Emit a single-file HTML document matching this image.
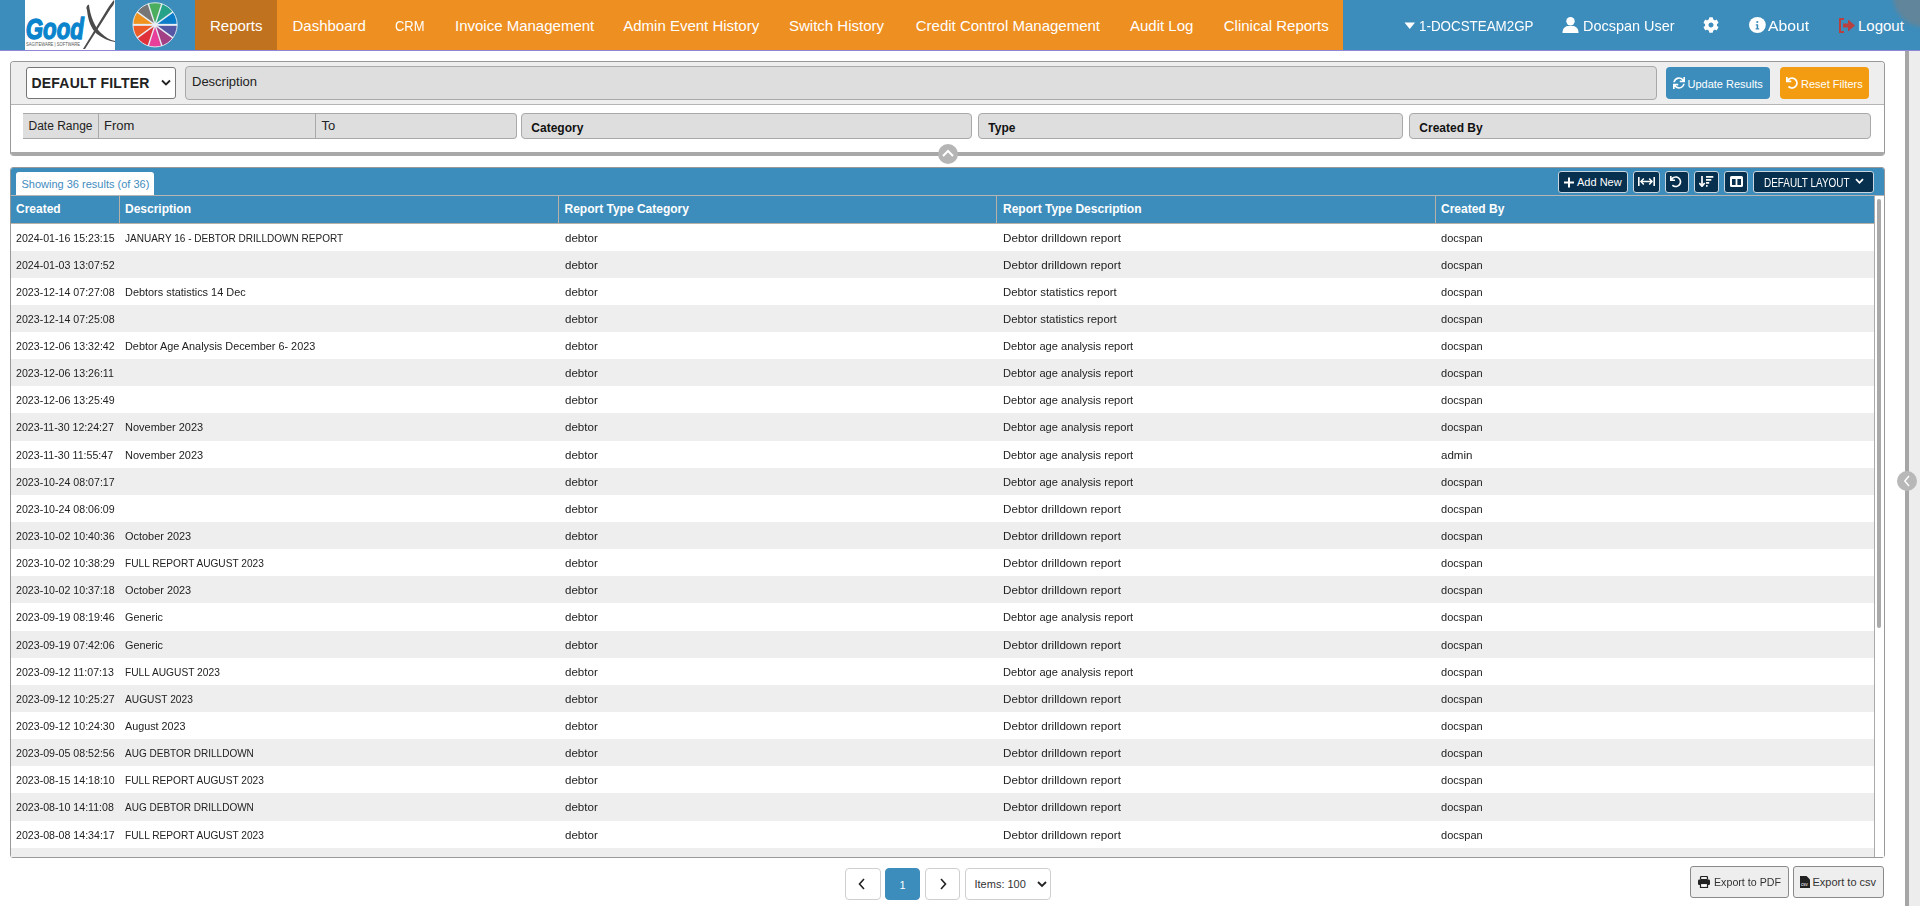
<!DOCTYPE html>
<html><head><meta charset="utf-8"><title>Reports</title>
<style>
*{box-sizing:border-box;margin:0;padding:0}
html,body{width:1920px;height:906px;overflow:hidden;background:#fff;font-family:"Liberation Sans",sans-serif;color:#333}
.abs{position:absolute}
.hdr{position:absolute;left:0;top:0;width:1920px;height:50px;background:#3c8dbc}
.nav{position:absolute;top:1px;height:50px;line-height:50px;font-size:15px;color:#fff;white-space:nowrap}
.box{position:absolute;border-radius:3px}
.inp{position:absolute;background:#dedede;border:1px solid #a9a9a9;border-radius:4px;font-size:13px;color:#222;white-space:nowrap}
.row{position:absolute;left:11px;width:1863px;height:27.14px}
.row span{position:absolute;top:0.5px;line-height:27px;font-size:11px;color:#222;white-space:nowrap}
.th{position:absolute;top:196px;height:27px;line-height:27px;font-size:12px;font-weight:bold;color:#fff;white-space:nowrap}
.tb{position:absolute;top:171px;height:22px;background:#06304e;border:1px solid #c9d6e0;border-radius:3px;color:#fff}
.pg{position:absolute;top:868px;height:32px;border:1px solid #cfcfcf;border-radius:4px;background:#fff}
.ex{position:absolute;top:866px;height:32px;border:1px solid #8a8a8a;border-radius:3px;background:#eeeeee;font-size:11px;color:#333;white-space:nowrap}
.tx{position:absolute;white-space:nowrap}
</style></head><body>

<div class="hdr"></div>
<div class="abs" style="left:195px;top:0;width:82px;height:50px;background:#c0721e"></div>
<div class="abs" style="left:277px;top:0;width:1066px;height:50px;background:#ee8f22"></div>
<div class="abs" style="left:0;top:50px;width:1920px;height:1px;background:#8f86d8"></div>
<div class="abs" style="left:25px;top:0;width:90px;height:50px;background:#fff;overflow:hidden">
<svg width="90" height="50" viewBox="0 0 90 50" style="position:absolute;left:0;top:0">
<text x="0.8" y="39.3" font-family="Liberation Sans" font-weight="bold" font-style="italic" font-size="29" fill="#0a84cc" stroke="#0a84cc" stroke-width="1.3" stroke-linejoin="round" textLength="58" lengthAdjust="spacingAndGlyphs">Good</text>
<path d="M62,10 C60,6 64,4 64,5 C65,15 70,28 76,33 C80,37 85,40 90,41 L90,42 C84,41 77,38 72,34 C66,29 63,20 62,10 Z" fill="#4a4a4a"/>
<path d="M89,0 C90,3 88,6 86,8 L60,49 L58,49 L83,8 C85,5 87,2 89,0 Z" fill="#4a4a4a"/>
<text x="1" y="46" font-family="Liberation Sans" font-size="4.6" fill="#555" textLength="54" lengthAdjust="spacingAndGlyphs">SAGITEWARE | SOFTWARE</text>
</svg></div>
<svg class="abs" style="left:0;top:0" width="200" height="50"><path d="M155.06,24.85 L148.23,3.83 A22.1,22.1 0 0 1 161.89,3.83 Z" fill="#4aae5e"/>
<path d="M155.06,24.85 L161.89,3.83 A22.1,22.1 0 0 1 172.94,11.86 Z" fill="#26a289"/>
<path d="M155.06,24.85 L172.94,11.86 A22.1,22.1 0 0 1 177.16,24.85 Z" fill="#0a7cc8"/>
<path d="M155.06,24.85 L177.16,24.85 A22.1,22.1 0 0 1 172.94,37.84 Z" fill="#5557a5"/>
<path d="M155.06,24.85 L172.94,37.84 A22.1,22.1 0 0 1 161.89,45.87 Z" fill="#a23f85"/>
<path d="M155.06,24.85 L161.89,45.87 A22.1,22.1 0 0 1 148.23,45.87 Z" fill="#e8409a"/>
<path d="M155.06,24.85 L148.23,45.87 A22.1,22.1 0 0 1 137.18,37.84 Z" fill="#e0303a"/>
<path d="M155.06,24.85 L137.18,37.84 A22.1,22.1 0 0 1 132.96,24.85 Z" fill="#ef5b26"/>
<path d="M155.06,24.85 L132.96,24.85 A22.1,22.1 0 0 1 137.18,11.86 Z" fill="#f0921e"/>
<path d="M155.06,24.85 L137.18,11.86 A22.1,22.1 0 0 1 148.23,3.83 Z" fill="#767676"/>
<line x1="155.06" y1="24.85" x2="148.23" y2="3.83" stroke="#e8eef4" stroke-width="1.4"/>
<line x1="155.06" y1="24.85" x2="161.89" y2="3.83" stroke="#e8eef4" stroke-width="1.4"/>
<line x1="155.06" y1="24.85" x2="172.94" y2="11.86" stroke="#e8eef4" stroke-width="1.4"/>
<line x1="155.06" y1="24.85" x2="177.16" y2="24.85" stroke="#e8eef4" stroke-width="2"/>
<line x1="155.06" y1="24.85" x2="172.94" y2="37.84" stroke="#e8eef4" stroke-width="1.4"/>
<line x1="155.06" y1="24.85" x2="161.89" y2="45.87" stroke="#e8eef4" stroke-width="1.4"/>
<line x1="155.06" y1="24.85" x2="148.23" y2="45.87" stroke="#e8eef4" stroke-width="1.4"/>
<line x1="155.06" y1="24.85" x2="137.18" y2="37.84" stroke="#e8eef4" stroke-width="1.4"/>
<line x1="155.06" y1="24.85" x2="132.96" y2="24.85" stroke="#e8eef4" stroke-width="2"/>
<line x1="155.06" y1="24.85" x2="137.18" y2="11.86" stroke="#e8eef4" stroke-width="1.4"/>
<circle cx="155.06" cy="24.85" r="22.1" fill="none" stroke="#e8eef4" stroke-width="0.9"/>
<circle cx="155.06" cy="24.85" r="2" fill="#e8eef4"/></svg>
<div class="nav" style="left:210px">Reports</div>
<div class="nav" style="left:292.5px">Dashboard</div>
<div class="nav" style="left:395px"><span style="display:inline-block;transform:scaleX(0.864);transform-origin:0 50%">CRM</span></div>
<div class="nav" style="left:455px">Invoice Management</div>
<div class="nav" style="left:623.25px">Admin Event History</div>
<div class="nav" style="left:789px">Switch History</div>
<div class="nav" style="left:915.75px">Credit Control Management</div>
<div class="nav" style="left:1130px">Audit Log</div>
<div class="nav" style="left:1223.75px">Clinical Reports</div>
<svg class="abs" style="left:1404px;top:21px" width="12" height="10" viewBox="0 0 12 10"><path d="M0.5,1.5 L11,1.5 L5.75,8 Z" fill="#fff"/></svg>
<div class="nav" style="left:1418.5px"><span style="display:inline-block;transform:scaleX(0.892);transform-origin:0 50%">1-DOCSTEAM2GP</span></div>
<svg class="abs" style="left:1562px;top:17px" width="17" height="16" viewBox="0 0 17 16"><circle cx="8.5" cy="4.3" r="4.2" fill="#fff"/><path d="M0.5,16 C0.5,11 3.5,9 6,9 L11,9 C13.5,9 16.5,11 16.5,16 Z" fill="#fff"/></svg>
<div class="nav" style="left:1582.5px"><span style="display:inline-block;transform:scaleX(0.963);transform-origin:0 50%">Docspan User</span></div>
<svg class="abs" style="left:1703px;top:17px" width="16" height="16" viewBox="0 0 512 512"><path fill="#fff" d="M487.4 315.7l-42.6-24.6c4.3-23.2 4.3-47 0-70.2l42.6-24.6c4.9-2.8 7.1-8.6 5.5-14-11.1-35.6-30-67.8-54.7-94.6-3.8-4.1-10-5.1-14.8-2.3L380.8 110c-17.9-15.4-38.5-27.3-60.8-35.1V25.8c0-5.6-3.9-10.5-9.4-11.7-36.7-8.2-74.3-7.8-109.2 0-5.5 1.2-9.4 6.1-9.4 11.7V75c-22.2 7.9-42.8 19.8-60.8 35.1L88.7 85.5c-4.9-2.8-11-1.9-14.8 2.3-24.7 26.7-43.6 58.9-54.7 94.6-1.7 5.4.6 11.2 5.5 14L67.3 221c-4.3 23.2-4.3 47 0 70.2l-42.6 24.6c-4.9 2.8-7.1 8.6-5.5 14 11.1 35.6 30 67.8 54.7 94.6 3.8 4.1 10 5.1 14.8 2.3l42.6-24.6c17.9 15.4 38.5 27.3 60.8 35.1v49.2c0 5.6 3.9 10.5 9.4 11.7 36.7 8.2 74.3 7.8 109.2 0 5.5-1.2 9.4-6.1 9.4-11.7v-49.2c22.2-7.9 42.8-19.8 60.8-35.1l42.6 24.6c4.9 2.8 11 1.9 14.8-2.3 24.7-26.7 43.6-58.9 54.7-94.6 1.5-5.5-.7-11.3-5.6-14.1zM256 336c-44.1 0-80-35.9-80-80s35.9-80 80-80 80 35.9 80 80-35.9 80-80 80z"/></svg>
<svg class="abs" style="left:1749px;top:17px" width="17" height="16" viewBox="0 0 17 16"><ellipse cx="8.4" cy="8" rx="8.4" ry="8" fill="#fff"/><circle cx="8.3" cy="5" r="1.1" fill="#3c8dbc"/><path d="M6.8,7.2 L9.2,7.2 L9.2,11.3 L10.2,11.3 L10.2,12.5 L6.6,12.5 L6.6,11.3 L7.6,11.3 L7.6,8.4 L6.8,8.4 Z" fill="#3c8dbc"/></svg>
<div class="nav" style="left:1768.2px"><span style="display:inline-block;transform:scaleX(1.046);transform-origin:0 50%">About</span></div>
<svg class="abs" style="left:1838.5px;top:17.5px" width="17" height="15" viewBox="0 0 17 15"><path d="M5,1 L1,1 L1,14 L5,14" fill="none" stroke="#b8413f" stroke-width="2"/><path d="M4,5.5 L9,5.5 L9,1.5 L16,7.5 L9,13.5 L9,9.5 L4,9.5 Z" fill="#b8413f"/></svg>
<div class="nav" style="left:1858px">Logout</div>
<div class="abs" style="left:1893px;top:-35px;width:62px;height:62px;border-radius:50%;background:rgba(128,128,128,0.55);filter:blur(2px)"></div>
<div class="abs" style="left:1905px;top:51px;width:4px;height:855px;background:#a6a6a6"></div>
<div class="abs" style="left:1909px;top:51px;width:11px;height:855px;background:#ededed"></div>
<div class="abs" style="left:1897px;top:471px;width:20px;height:20px;border-radius:50%;background:#b8b8b8"></div>
<svg class="abs" style="left:1902px;top:475px" width="10" height="12" viewBox="0 0 10 12"><path d="M7,1 L2.8,6 L7,11" fill="none" stroke="#fff" stroke-width="1.4"/></svg>
<div class="abs" style="left:10px;top:61px;width:1875px;height:95px;border:1px solid #999;border-bottom:0;border-radius:4px;background:#fff;overflow:hidden"><div class="abs" style="left:0;top:0;width:100%;height:43px;background:#eeeeee;border-bottom:1px solid #b5b5b5"></div><div class="abs" style="left:0;bottom:0;width:100%;height:4px;background:#a8a8a8"></div></div>
<div class="abs" style="left:26px;top:67px;width:150px;height:32px;background:#fff;border:1px solid #767676;border-radius:3px"></div>
<div class="tx" style="left:31.5px;top:67px;line-height:32px;font-size:14px;font-weight:bold;color:#222;letter-spacing:0.2px">DEFAULT FILTER</div>
<svg class="abs" style="left:161px;top:79px" width="10" height="8" viewBox="0 0 10 8"><path d="M1,1.5 L5,5.5 L9,1.5" fill="none" stroke="#222" stroke-width="1.8"/></svg>
<div class="inp" style="left:185px;top:66px;width:1472px;height:34px;line-height:29px;padding-left:6px">Description</div>
<div class="box" style="left:1666px;top:67px;width:104px;height:32px;background:#3c8dbc;border-radius:4px"></div>
<svg class="abs" style="left:1672.5px;top:77px" width="12" height="12" viewBox="0 0 512 512"><path fill="#fff" d="M440.65 12.57l4 82.77A247.16 247.16 0 0 0 255.83 8C134.73 8 33.91 94.92 12.29 209.82A12 12 0 0 0 24.09 224h49.05a12 12 0 0 0 11.67-9.26 175.91 175.91 0 0 1 317-56.94l-101.46-4.86a12 12 0 0 0-12.57 12v47.41a12 12 0 0 0 12 12H500a12 12 0 0 0 12-12V12a12 12 0 0 0-12-12h-47.37a12 12 0 0 0-11.98 12.57zM255.83 432a175.61 175.61 0 0 1-146-77.8l101.8 4.87a12 12 0 0 0 12.57-12v-47.4a12 12 0 0 0-12-12H12a12 12 0 0 0-12 12V500a12 12 0 0 0 12 12h47.35a12 12 0 0 0 12-12.6l-4.15-82.57A247.17 247.17 0 0 0 255.83 504c121.11 0 221.93-86.92 243.55-201.82a12 12 0 0 0-11.8-14.18h-49.05a12 12 0 0 0-11.67 9.26A175.86 175.86 0 0 1 255.83 432z"/></svg>
<div class="tx" style="left:1687.5px;top:67px;line-height:35px;font-size:11px;color:#fff">Update Results</div>
<div class="box" style="left:1780px;top:67px;width:89px;height:32px;background:#f39c12;border-radius:4px"></div>
<svg class="abs" style="left:1786px;top:77px" width="12" height="12" viewBox="0 0 512 512"><path fill="#fff" d="M212.333 224.333H12c-6.627 0-12-5.373-12-12V12C0 5.373 5.373 0 12 0h48c6.627 0 12 5.373 12 12v78.112C117.773 39.279 184.26 7.47 258.175 8.007c136.906.994 246.448 111.623 246.157 248.532C504.041 393.258 393.12 504 256.333 504c-64.089 0-122.496-24.313-166.51-64.215-5.099-4.622-5.334-12.554-.467-17.42l33.967-33.967c4.474-4.474 11.662-4.717 16.401-.525C170.76 415.336 211.58 432 256.333 432c97.268 0 176-78.716 176-176 0-97.267-78.716-176-176-176-58.496 0-110.28 28.476-142.274 72.333h98.274c6.627 0 12 5.373 12 12v48c0 6.627-5.373 12-12 12z"/></svg>
<div class="tx" style="left:1801px;top:67px;line-height:35px;font-size:11px;color:#fff">Reset Filters</div>
<div class="inp" style="left:23px;top:113px;width:494px;height:26px;border-left:0;border-radius:0 4px 4px 0"></div>
<div class="abs" style="left:98px;top:114px;width:1px;height:24px;background:#a9a9a9"></div>
<div class="abs" style="left:315px;top:114px;width:1px;height:24px;background:#a9a9a9"></div>
<div class="tx" style="left:28.5px;top:113px;line-height:26px;font-size:12px;color:#222">Date Range</div>
<div class="tx" style="left:104px;top:113px;line-height:26px;font-size:13px;color:#222">From</div>
<div class="tx" style="left:321.5px;top:113px;line-height:26px;font-size:13px;color:#222">To</div>
<div class="inp" style="left:521px;top:113px;width:451px;height:26px;line-height:28px;padding-left:9.3px;font-weight:bold;font-size:12px;color:#111">Category</div>
<div class="inp" style="left:978px;top:113px;width:425px;height:26px;line-height:28px;padding-left:9.3px;font-weight:bold;font-size:12px;color:#111">Type</div>
<div class="inp" style="left:1409px;top:113px;width:462px;height:26px;line-height:28px;padding-left:9.3px;font-weight:bold;font-size:12px;color:#111">Created By</div>
<div class="abs" style="left:938px;top:144px;width:20px;height:20px;border-radius:50%;background:#b5b5b5"></div>
<svg class="abs" style="left:941px;top:148px" width="14" height="10" viewBox="0 0 14 10"><path d="M2,8 L7,3 L12,8" fill="none" stroke="#fff" stroke-width="2"/></svg>
<div class="abs" style="left:10px;top:167px;width:1875px;height:691px;border:1px solid #999;border-radius:3px;background:#fff;overflow:hidden"><div class="abs" style="left:0;top:0;width:100%;height:28px;background:#3c8dbc;border-bottom:1px solid #b5b5b5"></div></div>
<div class="abs" style="left:16px;top:172px;width:138px;height:23px;background:#fff;border-radius:3px 3px 0 0"></div>
<div class="tx" style="left:21.5px;top:172px;line-height:24px;font-size:11px;color:#3f8cc0">Showing 36 results (of 36)</div>
<div class="tb" style="left:1558px;width:70px"></div>
<svg class="abs" style="left:1564px;top:176.5px" width="10" height="11" viewBox="0 0 10 11"><path d="M5,0.5 V10.5 M0,5.5 H10" stroke="#fff" stroke-width="2"/></svg>
<div class="tx" style="left:1577px;top:172px;line-height:21px;font-size:11px;color:#fff">Add New</div>
<div class="tb" style="left:1633px;width:27px"></div>
<svg class="abs" style="left:1638px;top:177px" width="17" height="9" viewBox="0 0 17 9"><path d="M0.8,0 V9 M16.2,0 V9" stroke="#fff" stroke-width="1.6"/><path d="M3,4.5 H14" stroke="#fff" stroke-width="1.5"/><path d="M5.8,1.6 L3,4.5 L5.8,7.4 M11.2,1.6 L14,4.5 L11.2,7.4" fill="none" stroke="#fff" stroke-width="1.5"/></svg>
<div class="tb" style="left:1665px;width:24px"></div>
<svg class="abs" style="left:1670px;top:176px" width="11.5" height="11.5" viewBox="0 0 512 512"><path fill="#fff" d="M212.333 224.333H12c-6.627 0-12-5.373-12-12V12C0 5.373 5.373 0 12 0h48c6.627 0 12 5.373 12 12v78.112C117.773 39.279 184.26 7.47 258.175 8.007c136.906.994 246.448 111.623 246.157 248.532C504.041 393.258 393.12 504 256.333 504c-64.089 0-122.496-24.313-166.51-64.215-5.099-4.622-5.334-12.554-.467-17.42l33.967-33.967c4.474-4.474 11.662-4.717 16.401-.525C170.76 415.336 211.58 432 256.333 432c97.268 0 176-78.716 176-176 0-97.267-78.716-176-176-176-58.496 0-110.28 28.476-142.274 72.333h98.274c6.627 0 12 5.373 12 12v48c0 6.627-5.373 12-12 12z"/></svg>
<div class="tb" style="left:1694px;width:25px"></div>
<svg class="abs" style="left:1699px;top:176px" width="15" height="11" viewBox="0 0 15 11"><path d="M3,0 V9.5" stroke="#fff" stroke-width="1.7"/><path d="M0.3,7 L3,10.3 L5.7,7" fill="none" stroke="#fff" stroke-width="1.6"/><path d="M7,0.9 H14.3 M7,3.8 H12.3 M7,6.8 H10.2 M7,9.8 H8.6" stroke="#fff" stroke-width="1.7"/></svg>
<div class="tb" style="left:1724px;width:24px"></div>
<svg class="abs" style="left:1729.7px;top:176px" width="13" height="11" viewBox="0 0 13 11"><rect x="0" y="0" width="13" height="11" rx="1.5" fill="#fff"/><rect x="2" y="3" width="3.6" height="6" fill="#06304e"/><rect x="7.4" y="3" width="3.6" height="6" fill="#06304e"/></svg>
<div class="tb" style="left:1753px;width:121px"></div>
<div class="tx" style="left:1763.5px;top:172px;line-height:22px;font-size:12px;color:#fff"><span style="display:inline-block;transform:scaleX(0.827);transform-origin:0 50%">DEFAULT LAYOUT</span></div>
<svg class="abs" style="left:1855px;top:178px" width="9" height="7" viewBox="0 0 9 7"><path d="M1,1.2 L4.5,4.8 L8,1.2" fill="none" stroke="#fff" stroke-width="1.8"/></svg>
<div class="abs" style="left:11px;top:196px;width:1863px;height:27px;background:#3c8dbc"></div>
<div class="abs" style="left:119px;top:196px;width:1px;height:27px;background:#b9b0a8"></div>
<div class="abs" style="left:558px;top:196px;width:1px;height:27px;background:#b9b0a8"></div>
<div class="abs" style="left:996px;top:196px;width:1px;height:27px;background:#b9b0a8"></div>
<div class="abs" style="left:1435px;top:196px;width:1px;height:27px;background:#b9b0a8"></div>
<div class="abs" style="left:11px;top:223px;width:1863px;height:1px;background:#b9b0a8"></div>
<div class="th" style="left:16px">Created</div>
<div class="th" style="left:125px">Description</div>
<div class="th" style="left:564.5px">Report Type Category</div>
<div class="th" style="left:1003px">Report Type Description</div>
<div class="th" style="left:1441px">Created By</div>
<div class="abs" style="left:0;top:223.5px;width:1874px;height:633.5px;overflow:hidden">
<div class="row" style="top:0.00px;background:#fff"><span style="left:5px"><span style="display:inline-block;transform:scaleX(0.965);transform-origin:0 50%">2024-01-16 15:23:15</span></span><span style="left:114px"><span style="display:inline-block;transform:scaleX(0.911);transform-origin:0 50%">JANUARY 16 - DEBTOR DRILLDOWN REPORT</span></span><span style="left:553.5px"><span style="display:inline-block;transform:scaleX(1.052);transform-origin:0 50%">debtor</span></span><span style="left:992px"><span style="display:inline-block;transform:scaleX(1.060);transform-origin:0 50%">Debtor drilldown report</span></span><span style="left:1430px"><span style="display:inline-block;transform:scaleX(1.003);transform-origin:0 50%">docspan</span></span></div>
<div class="row" style="top:27.14px;background:#eeeeee"><span style="left:5px"><span style="display:inline-block;transform:scaleX(0.966);transform-origin:0 50%">2024-01-03 13:07:52</span></span><span style="left:114px"></span><span style="left:553.5px"><span style="display:inline-block;transform:scaleX(1.052);transform-origin:0 50%">debtor</span></span><span style="left:992px"><span style="display:inline-block;transform:scaleX(1.060);transform-origin:0 50%">Debtor drilldown report</span></span><span style="left:1430px"><span style="display:inline-block;transform:scaleX(1.003);transform-origin:0 50%">docspan</span></span></div>
<div class="row" style="top:54.28px;background:#fff"><span style="left:5px"><span style="display:inline-block;transform:scaleX(0.966);transform-origin:0 50%">2023-12-14 07:27:08</span></span><span style="left:114px"><span style="display:inline-block;transform:scaleX(0.992);transform-origin:0 50%">Debtors statistics 14 Dec</span></span><span style="left:553.5px"><span style="display:inline-block;transform:scaleX(1.052);transform-origin:0 50%">debtor</span></span><span style="left:992px"><span style="display:inline-block;transform:scaleX(1.033);transform-origin:0 50%">Debtor statistics report</span></span><span style="left:1430px"><span style="display:inline-block;transform:scaleX(1.003);transform-origin:0 50%">docspan</span></span></div>
<div class="row" style="top:81.42px;background:#eeeeee"><span style="left:5px"><span style="display:inline-block;transform:scaleX(0.966);transform-origin:0 50%">2023-12-14 07:25:08</span></span><span style="left:114px"></span><span style="left:553.5px"><span style="display:inline-block;transform:scaleX(1.052);transform-origin:0 50%">debtor</span></span><span style="left:992px"><span style="display:inline-block;transform:scaleX(1.033);transform-origin:0 50%">Debtor statistics report</span></span><span style="left:1430px"><span style="display:inline-block;transform:scaleX(1.003);transform-origin:0 50%">docspan</span></span></div>
<div class="row" style="top:108.56px;background:#fff"><span style="left:5px"><span style="display:inline-block;transform:scaleX(0.966);transform-origin:0 50%">2023-12-06 13:32:42</span></span><span style="left:114px"><span style="display:inline-block;transform:scaleX(0.988);transform-origin:0 50%">Debtor Age Analysis December 6- 2023</span></span><span style="left:553.5px"><span style="display:inline-block;transform:scaleX(1.052);transform-origin:0 50%">debtor</span></span><span style="left:992px"><span style="display:inline-block;transform:scaleX(1.009);transform-origin:0 50%">Debtor age analysis report</span></span><span style="left:1430px"><span style="display:inline-block;transform:scaleX(1.003);transform-origin:0 50%">docspan</span></span></div>
<div class="row" style="top:135.70px;background:#eeeeee"><span style="left:5px"><span style="display:inline-block;transform:scaleX(0.966);transform-origin:0 50%">2023-12-06 13:26:11</span></span><span style="left:114px"></span><span style="left:553.5px"><span style="display:inline-block;transform:scaleX(1.052);transform-origin:0 50%">debtor</span></span><span style="left:992px"><span style="display:inline-block;transform:scaleX(1.009);transform-origin:0 50%">Debtor age analysis report</span></span><span style="left:1430px"><span style="display:inline-block;transform:scaleX(1.003);transform-origin:0 50%">docspan</span></span></div>
<div class="row" style="top:162.84px;background:#fff"><span style="left:5px"><span style="display:inline-block;transform:scaleX(0.966);transform-origin:0 50%">2023-12-06 13:25:49</span></span><span style="left:114px"></span><span style="left:553.5px"><span style="display:inline-block;transform:scaleX(1.052);transform-origin:0 50%">debtor</span></span><span style="left:992px"><span style="display:inline-block;transform:scaleX(1.009);transform-origin:0 50%">Debtor age analysis report</span></span><span style="left:1430px"><span style="display:inline-block;transform:scaleX(1.003);transform-origin:0 50%">docspan</span></span></div>
<div class="row" style="top:189.98px;background:#eeeeee"><span style="left:5px"><span style="display:inline-block;transform:scaleX(0.966);transform-origin:0 50%">2023-11-30 12:24:27</span></span><span style="left:114px"><span style="display:inline-block;transform:scaleX(0.998);transform-origin:0 50%">November 2023</span></span><span style="left:553.5px"><span style="display:inline-block;transform:scaleX(1.052);transform-origin:0 50%">debtor</span></span><span style="left:992px"><span style="display:inline-block;transform:scaleX(1.009);transform-origin:0 50%">Debtor age analysis report</span></span><span style="left:1430px"><span style="display:inline-block;transform:scaleX(1.003);transform-origin:0 50%">docspan</span></span></div>
<div class="row" style="top:217.12px;background:#fff"><span style="left:5px"><span style="display:inline-block;transform:scaleX(0.966);transform-origin:0 50%">2023-11-30 11:55:47</span></span><span style="left:114px"><span style="display:inline-block;transform:scaleX(0.998);transform-origin:0 50%">November 2023</span></span><span style="left:553.5px"><span style="display:inline-block;transform:scaleX(1.052);transform-origin:0 50%">debtor</span></span><span style="left:992px"><span style="display:inline-block;transform:scaleX(1.009);transform-origin:0 50%">Debtor age analysis report</span></span><span style="left:1430px"><span style="display:inline-block;transform:scaleX(1.051);transform-origin:0 50%">admin</span></span></div>
<div class="row" style="top:244.26px;background:#eeeeee"><span style="left:5px"><span style="display:inline-block;transform:scaleX(0.966);transform-origin:0 50%">2023-10-24 08:07:17</span></span><span style="left:114px"></span><span style="left:553.5px"><span style="display:inline-block;transform:scaleX(1.052);transform-origin:0 50%">debtor</span></span><span style="left:992px"><span style="display:inline-block;transform:scaleX(1.009);transform-origin:0 50%">Debtor age analysis report</span></span><span style="left:1430px"><span style="display:inline-block;transform:scaleX(1.003);transform-origin:0 50%">docspan</span></span></div>
<div class="row" style="top:271.40px;background:#fff"><span style="left:5px"><span style="display:inline-block;transform:scaleX(0.966);transform-origin:0 50%">2023-10-24 08:06:09</span></span><span style="left:114px"></span><span style="left:553.5px"><span style="display:inline-block;transform:scaleX(1.052);transform-origin:0 50%">debtor</span></span><span style="left:992px"><span style="display:inline-block;transform:scaleX(1.060);transform-origin:0 50%">Debtor drilldown report</span></span><span style="left:1430px"><span style="display:inline-block;transform:scaleX(1.003);transform-origin:0 50%">docspan</span></span></div>
<div class="row" style="top:298.54px;background:#eeeeee"><span style="left:5px"><span style="display:inline-block;transform:scaleX(0.966);transform-origin:0 50%">2023-10-02 10:40:36</span></span><span style="left:114px"><span style="display:inline-block;transform:scaleX(0.993);transform-origin:0 50%">October 2023</span></span><span style="left:553.5px"><span style="display:inline-block;transform:scaleX(1.052);transform-origin:0 50%">debtor</span></span><span style="left:992px"><span style="display:inline-block;transform:scaleX(1.060);transform-origin:0 50%">Debtor drilldown report</span></span><span style="left:1430px"><span style="display:inline-block;transform:scaleX(1.003);transform-origin:0 50%">docspan</span></span></div>
<div class="row" style="top:325.68px;background:#fff"><span style="left:5px"><span style="display:inline-block;transform:scaleX(0.966);transform-origin:0 50%">2023-10-02 10:38:29</span></span><span style="left:114px"><span style="display:inline-block;transform:scaleX(0.922);transform-origin:0 50%">FULL REPORT AUGUST 2023</span></span><span style="left:553.5px"><span style="display:inline-block;transform:scaleX(1.052);transform-origin:0 50%">debtor</span></span><span style="left:992px"><span style="display:inline-block;transform:scaleX(1.060);transform-origin:0 50%">Debtor drilldown report</span></span><span style="left:1430px"><span style="display:inline-block;transform:scaleX(1.003);transform-origin:0 50%">docspan</span></span></div>
<div class="row" style="top:352.82px;background:#eeeeee"><span style="left:5px"><span style="display:inline-block;transform:scaleX(0.966);transform-origin:0 50%">2023-10-02 10:37:18</span></span><span style="left:114px"><span style="display:inline-block;transform:scaleX(0.993);transform-origin:0 50%">October 2023</span></span><span style="left:553.5px"><span style="display:inline-block;transform:scaleX(1.052);transform-origin:0 50%">debtor</span></span><span style="left:992px"><span style="display:inline-block;transform:scaleX(1.060);transform-origin:0 50%">Debtor drilldown report</span></span><span style="left:1430px"><span style="display:inline-block;transform:scaleX(1.003);transform-origin:0 50%">docspan</span></span></div>
<div class="row" style="top:379.96px;background:#fff"><span style="left:5px"><span style="display:inline-block;transform:scaleX(0.966);transform-origin:0 50%">2023-09-19 08:19:46</span></span><span style="left:114px"><span style="display:inline-block;transform:scaleX(0.987);transform-origin:0 50%">Generic</span></span><span style="left:553.5px"><span style="display:inline-block;transform:scaleX(1.052);transform-origin:0 50%">debtor</span></span><span style="left:992px"><span style="display:inline-block;transform:scaleX(1.009);transform-origin:0 50%">Debtor age analysis report</span></span><span style="left:1430px"><span style="display:inline-block;transform:scaleX(1.003);transform-origin:0 50%">docspan</span></span></div>
<div class="row" style="top:407.10px;background:#eeeeee"><span style="left:5px"><span style="display:inline-block;transform:scaleX(0.966);transform-origin:0 50%">2023-09-19 07:42:06</span></span><span style="left:114px"><span style="display:inline-block;transform:scaleX(0.987);transform-origin:0 50%">Generic</span></span><span style="left:553.5px"><span style="display:inline-block;transform:scaleX(1.052);transform-origin:0 50%">debtor</span></span><span style="left:992px"><span style="display:inline-block;transform:scaleX(1.060);transform-origin:0 50%">Debtor drilldown report</span></span><span style="left:1430px"><span style="display:inline-block;transform:scaleX(1.003);transform-origin:0 50%">docspan</span></span></div>
<div class="row" style="top:434.24px;background:#fff"><span style="left:5px"><span style="display:inline-block;transform:scaleX(0.966);transform-origin:0 50%">2023-09-12 11:07:13</span></span><span style="left:114px"><span style="display:inline-block;transform:scaleX(0.929);transform-origin:0 50%">FULL AUGUST 2023</span></span><span style="left:553.5px"><span style="display:inline-block;transform:scaleX(1.052);transform-origin:0 50%">debtor</span></span><span style="left:992px"><span style="display:inline-block;transform:scaleX(1.009);transform-origin:0 50%">Debtor age analysis report</span></span><span style="left:1430px"><span style="display:inline-block;transform:scaleX(1.003);transform-origin:0 50%">docspan</span></span></div>
<div class="row" style="top:461.38px;background:#eeeeee"><span style="left:5px"><span style="display:inline-block;transform:scaleX(0.966);transform-origin:0 50%">2023-09-12 10:25:27</span></span><span style="left:114px"><span style="display:inline-block;transform:scaleX(0.927);transform-origin:0 50%">AUGUST 2023</span></span><span style="left:553.5px"><span style="display:inline-block;transform:scaleX(1.052);transform-origin:0 50%">debtor</span></span><span style="left:992px"><span style="display:inline-block;transform:scaleX(1.060);transform-origin:0 50%">Debtor drilldown report</span></span><span style="left:1430px"><span style="display:inline-block;transform:scaleX(1.003);transform-origin:0 50%">docspan</span></span></div>
<div class="row" style="top:488.52px;background:#fff"><span style="left:5px"><span style="display:inline-block;transform:scaleX(0.966);transform-origin:0 50%">2023-09-12 10:24:30</span></span><span style="left:114px"><span style="display:inline-block;transform:scaleX(0.979);transform-origin:0 50%">August 2023</span></span><span style="left:553.5px"><span style="display:inline-block;transform:scaleX(1.052);transform-origin:0 50%">debtor</span></span><span style="left:992px"><span style="display:inline-block;transform:scaleX(1.060);transform-origin:0 50%">Debtor drilldown report</span></span><span style="left:1430px"><span style="display:inline-block;transform:scaleX(1.003);transform-origin:0 50%">docspan</span></span></div>
<div class="row" style="top:515.66px;background:#eeeeee"><span style="left:5px"><span style="display:inline-block;transform:scaleX(0.966);transform-origin:0 50%">2023-09-05 08:52:56</span></span><span style="left:114px"><span style="display:inline-block;transform:scaleX(0.910);transform-origin:0 50%">AUG DEBTOR DRILLDOWN</span></span><span style="left:553.5px"><span style="display:inline-block;transform:scaleX(1.052);transform-origin:0 50%">debtor</span></span><span style="left:992px"><span style="display:inline-block;transform:scaleX(1.060);transform-origin:0 50%">Debtor drilldown report</span></span><span style="left:1430px"><span style="display:inline-block;transform:scaleX(1.003);transform-origin:0 50%">docspan</span></span></div>
<div class="row" style="top:542.80px;background:#fff"><span style="left:5px"><span style="display:inline-block;transform:scaleX(0.966);transform-origin:0 50%">2023-08-15 14:18:10</span></span><span style="left:114px"><span style="display:inline-block;transform:scaleX(0.922);transform-origin:0 50%">FULL REPORT AUGUST 2023</span></span><span style="left:553.5px"><span style="display:inline-block;transform:scaleX(1.052);transform-origin:0 50%">debtor</span></span><span style="left:992px"><span style="display:inline-block;transform:scaleX(1.060);transform-origin:0 50%">Debtor drilldown report</span></span><span style="left:1430px"><span style="display:inline-block;transform:scaleX(1.003);transform-origin:0 50%">docspan</span></span></div>
<div class="row" style="top:569.94px;background:#eeeeee"><span style="left:5px"><span style="display:inline-block;transform:scaleX(0.966);transform-origin:0 50%">2023-08-10 14:11:08</span></span><span style="left:114px"><span style="display:inline-block;transform:scaleX(0.910);transform-origin:0 50%">AUG DEBTOR DRILLDOWN</span></span><span style="left:553.5px"><span style="display:inline-block;transform:scaleX(1.052);transform-origin:0 50%">debtor</span></span><span style="left:992px"><span style="display:inline-block;transform:scaleX(1.060);transform-origin:0 50%">Debtor drilldown report</span></span><span style="left:1430px"><span style="display:inline-block;transform:scaleX(1.003);transform-origin:0 50%">docspan</span></span></div>
<div class="row" style="top:597.08px;background:#fff"><span style="left:5px"><span style="display:inline-block;transform:scaleX(0.966);transform-origin:0 50%">2023-08-08 14:34:17</span></span><span style="left:114px"><span style="display:inline-block;transform:scaleX(0.922);transform-origin:0 50%">FULL REPORT AUGUST 2023</span></span><span style="left:553.5px"><span style="display:inline-block;transform:scaleX(1.052);transform-origin:0 50%">debtor</span></span><span style="left:992px"><span style="display:inline-block;transform:scaleX(1.060);transform-origin:0 50%">Debtor drilldown report</span></span><span style="left:1430px"><span style="display:inline-block;transform:scaleX(1.003);transform-origin:0 50%">docspan</span></span></div>
<div class="row" style="top:624.22px;background:#eeeeee"><span style="left:5px"></span><span style="left:114px"></span><span style="left:553.5px"></span><span style="left:992px"></span><span style="left:1430px"></span></div>
</div>
<div class="abs" style="left:1874px;top:196px;width:1px;height:661px;background:#aaa"></div>
<div class="abs" style="left:1875px;top:196px;width:9px;height:661px;background:#fff"></div>
<div class="abs" style="left:1877px;top:199px;width:4px;height:429px;border-radius:2px;background:#a9a9a9"></div>
<div class="pg" style="left:845px;width:36px"></div>
<svg class="abs" style="left:857px;top:878px" width="10" height="12" viewBox="0 0 10 12"><path d="M7,1 L2.5,6 L7,11" fill="none" stroke="#222" stroke-width="1.6"/></svg>
<div class="pg" style="left:885px;width:35px;background:#3c8dbc;border-color:#3c8dbc;color:#fff;font-size:11px;text-align:center;line-height:32px">1</div>
<div class="pg" style="left:925px;width:35px"></div>
<svg class="abs" style="left:938px;top:878px" width="10" height="12" viewBox="0 0 10 12"><path d="M3,1 L7.5,6 L3,11" fill="none" stroke="#222" stroke-width="1.6"/></svg>
<div class="pg" style="left:965px;width:86px"></div>
<div class="tx" style="left:974.5px;top:868px;line-height:33px;font-size:11px;color:#333">Items: 100</div>
<svg class="abs" style="left:1036.5px;top:881px" width="10" height="7" viewBox="0 0 10 7"><path d="M1,1 L5,5 L9,1" fill="none" stroke="#222" stroke-width="1.8"/></svg>
<div class="ex" style="left:1690px;width:99px"></div>
<svg class="abs" style="left:1698px;top:876px" width="12" height="12" viewBox="0 0 12 12"><rect x="2.5" y="0.5" width="7" height="3" rx="1" fill="none" stroke="#222" stroke-width="1.2"/><rect x="0" y="3.5" width="12" height="5.5" rx="1.2" fill="#222"/><rect x="2.5" y="7.5" width="7" height="4" fill="#fff" stroke="#222" stroke-width="1.2"/></svg>
<div class="tx" style="left:1713.5px;top:866px;line-height:33px;font-size:11px;color:#333"><span style="display:inline-block;transform:scaleX(0.970);transform-origin:0 50%">Export to PDF</span></div>
<div class="ex" style="left:1793px;width:91px"></div>
<svg class="abs" style="left:1800px;top:876px" width="10" height="12" viewBox="0 0 10 12"><path d="M0,0 H6.5 L10,3.5 V12 H0 Z" fill="#222"/><text x="1" y="10" font-size="4.5" font-family="Liberation Sans" fill="#fff">csv</text></svg>
<div class="tx" style="left:1812.5px;top:866px;line-height:33px;font-size:11px;color:#333">Export to csv</div>
</body></html>
